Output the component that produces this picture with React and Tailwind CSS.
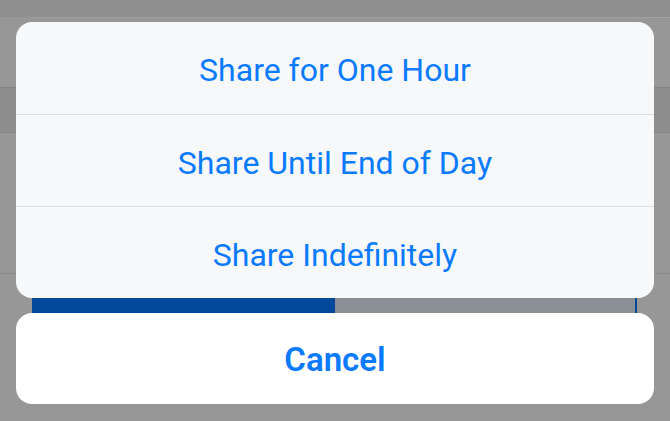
import React from 'react';

const options = ['Share for One Hour', 'Share Until End of Day', 'Share Indefinitely'];

const App = () => {
    return (
        <div
            className="relative w-[670px] h-[421px] overflow-hidden bg-[#979797]"
            style={{fontFamily: 'Roboto, "Noto Sans", sans-serif'}}
        >
            {/* dimmed page underneath */}
            <div className="flex flex-col">
                <div className="h-[17px] bg-[#8e8e8e]"></div>
                <div className="ml-[32px] h-px bg-[#a3a3a3]"></div>
                <div className="h-[69px]"></div>
                <div className="h-[46px] bg-[#8d8d8d] border-y border-[#858585]"></div>
                <div className="h-[140px]"></div>
                <div className="h-px bg-[#8a8a8a]"></div>
                <div className="h-[23px]"></div>
                <div className="ml-[32px] w-[605px] h-[40px] flex">
                    <div className="w-[303px] bg-[#03499b]"></div>
                    <div className="flex-1 bg-[#8b9097] border-r-2 border-[#03499b]"></div>
                </div>
            </div>

            {/* action sheet */}
            <div className="absolute inset-0 flex flex-col px-4 pt-[22px] gap-[15px]">
                <div className="rounded-[16px] bg-[#f7f8fa] overflow-hidden flex flex-col">
                    {options.map((label, i) => (
                        <div
                            key={label}
                            className={`h-[92px] pt-[4px] flex items-center justify-center text-[32px] text-[#0a7aff] ${
                                i > 0 ? 'border-t border-[#dcdde0]' : ''
                            }`}
                        >
                            {label}
                        </div>
                    ))}
                </div>
                <div className="h-[91px] pt-[2px] rounded-[16px] bg-white flex items-center justify-center text-[33px] font-semibold text-[#0a7aff]">
                    Cancel
                </div>
            </div>
        </div>
    );
};

export default App;
